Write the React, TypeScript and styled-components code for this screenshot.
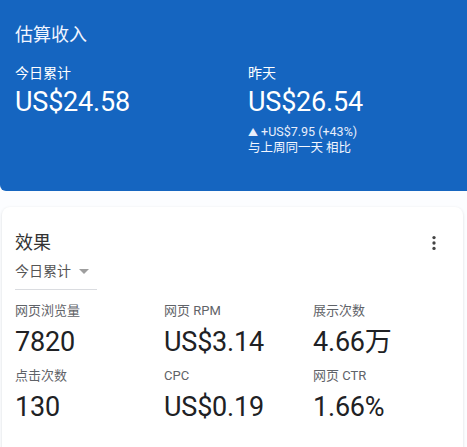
import React from 'react';
import styled, { createGlobalStyle } from 'styled-components';

const GlobalStyle = createGlobalStyle`
  html, body {
    margin: 0;
    padding: 0;
    background: #fcfdff;
    overflow: hidden;
  }
  body {
    font-family: Roboto, "Noto Sans CJK SC", sans-serif;
  }
`;

type Metric = { label: string; value: string };

const metrics: Metric[] = [
  { label: '网页浏览量', value: '7820' },
  { label: '网页 RPM', value: 'US$3.14' },
  { label: '展示次数', value: '4.66万' },
  { label: '点击次数', value: '130' },
  { label: 'CPC', value: 'US$0.19' },
  { label: '网页 CTR', value: '1.66%' },
];

const MoreIcon: React.FC = () => (
  <svg width="20" height="20" viewBox="0 0 24 24" fill="#444">
    <circle cx="12" cy="5.5" r="2" />
    <circle cx="12" cy="12" r="2" />
    <circle cx="12" cy="18.5" r="2" />
  </svg>
);

const App: React.FC = () => {
  return (
    <Page>
      <GlobalStyle />
      <EarningsCard>
        <EarningsTitle>估算收入</EarningsTitle>
        <EarningsColumns>
          <EarningsColumn>
            <EarningsLabel>今日累计</EarningsLabel>
            <EarningsAmount>US$24.58</EarningsAmount>
          </EarningsColumn>
          <EarningsColumn>
            <EarningsLabel>昨天</EarningsLabel>
            <EarningsAmount>US$26.54</EarningsAmount>
            <Delta>
              <span>▲</span> +US$7.95 (+43%)
            </Delta>
            <DeltaNote>与上周同一天 相比</DeltaNote>
          </EarningsColumn>
        </EarningsColumns>
      </EarningsCard>

      <PerfCard>
        <PerfHeader>
          <PerfTitle>效果</PerfTitle>
          <MoreButton>
            <MoreIcon />
          </MoreButton>
        </PerfHeader>
        <RangeSelect>
          今日累计
          <Caret />
        </RangeSelect>
        <MetricGrid>
          {metrics.map((m) => (
            <MetricCell key={m.label}>
              <MetricLabel>{m.label}</MetricLabel>
              <MetricValue>{m.value}</MetricValue>
            </MetricCell>
          ))}
        </MetricGrid>
      </PerfCard>
    </Page>
  );
};

const Page = styled.div`
  display: flex;
  flex-direction: column;
  width: 467px;
`;

const EarningsCard = styled.div`
  box-sizing: border-box;
  height: 191px;
  margin-right: -10px;
  padding: 23px 15px 0;
  background: #1565c0;
  color: #fff;
  border-radius: 0 0 6px 6px;
`;

const EarningsTitle = styled.div`
  font-size: 18px;
  line-height: 24px;
  color: #f1f5ff;
`;

const EarningsColumns = styled.div`
  display: grid;
  grid-template-columns: 233px 1fr;
  margin-top: 16px;
`;

const EarningsColumn = styled.div`
  display: flex;
  flex-direction: column;
`;

const EarningsLabel = styled.div`
  font-size: 14px;
  line-height: 20px;
`;

const EarningsAmount = styled.div`
  margin-top: 3px;
  font-size: 27px;
  line-height: 32px;
  letter-spacing: -0.2px;
`;

const Delta = styled.div`
  margin-top: 6px;
  font-size: 12.5px;
  line-height: 15px;
  color: #e8eefb;
  span {
    font-size: 10px;
  }
`;

const DeltaNote = styled.div`
  font-size: 12.5px;
  line-height: 15px;
  color: #f4f7ff;
`;

const PerfCard = styled.div`
  margin: 16px 4px 0 2px;
  padding: 24px 13px 40px;
  background: #fff;
  border-radius: 8px;
  box-shadow: 0 1px 3px rgba(60, 64, 67, 0.18);
`;

const PerfHeader = styled.div`
  display: flex;
  align-items: center;
  justify-content: space-between;
`;

const PerfTitle = styled.div`
  font-size: 18px;
  line-height: 24px;
  color: #333;
`;

const MoreButton = styled.div`
  display: flex;
  margin-right: 6px;
`;

const RangeSelect = styled.div`
  display: flex;
  align-items: center;
  width: 82px;
  margin-top: 6px;
  padding-bottom: 8px;
  font-size: 14px;
  line-height: 20px;
  color: #555;
  border-bottom: 1px solid #dadce0;
`;

const Caret = styled.span`
  margin-left: 8px;
  width: 0;
  height: 0;
  border-left: 5px solid transparent;
  border-right: 5px solid transparent;
  border-top: 5px solid #9e9e9e;
`;

const MetricGrid = styled.div`
  display: grid;
  grid-template-columns: 149px 149px 1fr;
  row-gap: 9px;
  margin-top: 12px;
`;

const MetricCell = styled.div`
  display: flex;
  flex-direction: column;
`;

const MetricLabel = styled.div`
  font-size: 13px;
  line-height: 18px;
  color: #5f6368;
`;

const MetricValue = styled.div`
  margin-top: 6px;
  font-size: 27px;
  line-height: 32px;
  color: #202124;
  letter-spacing: -0.2px;
`;

export default App;
